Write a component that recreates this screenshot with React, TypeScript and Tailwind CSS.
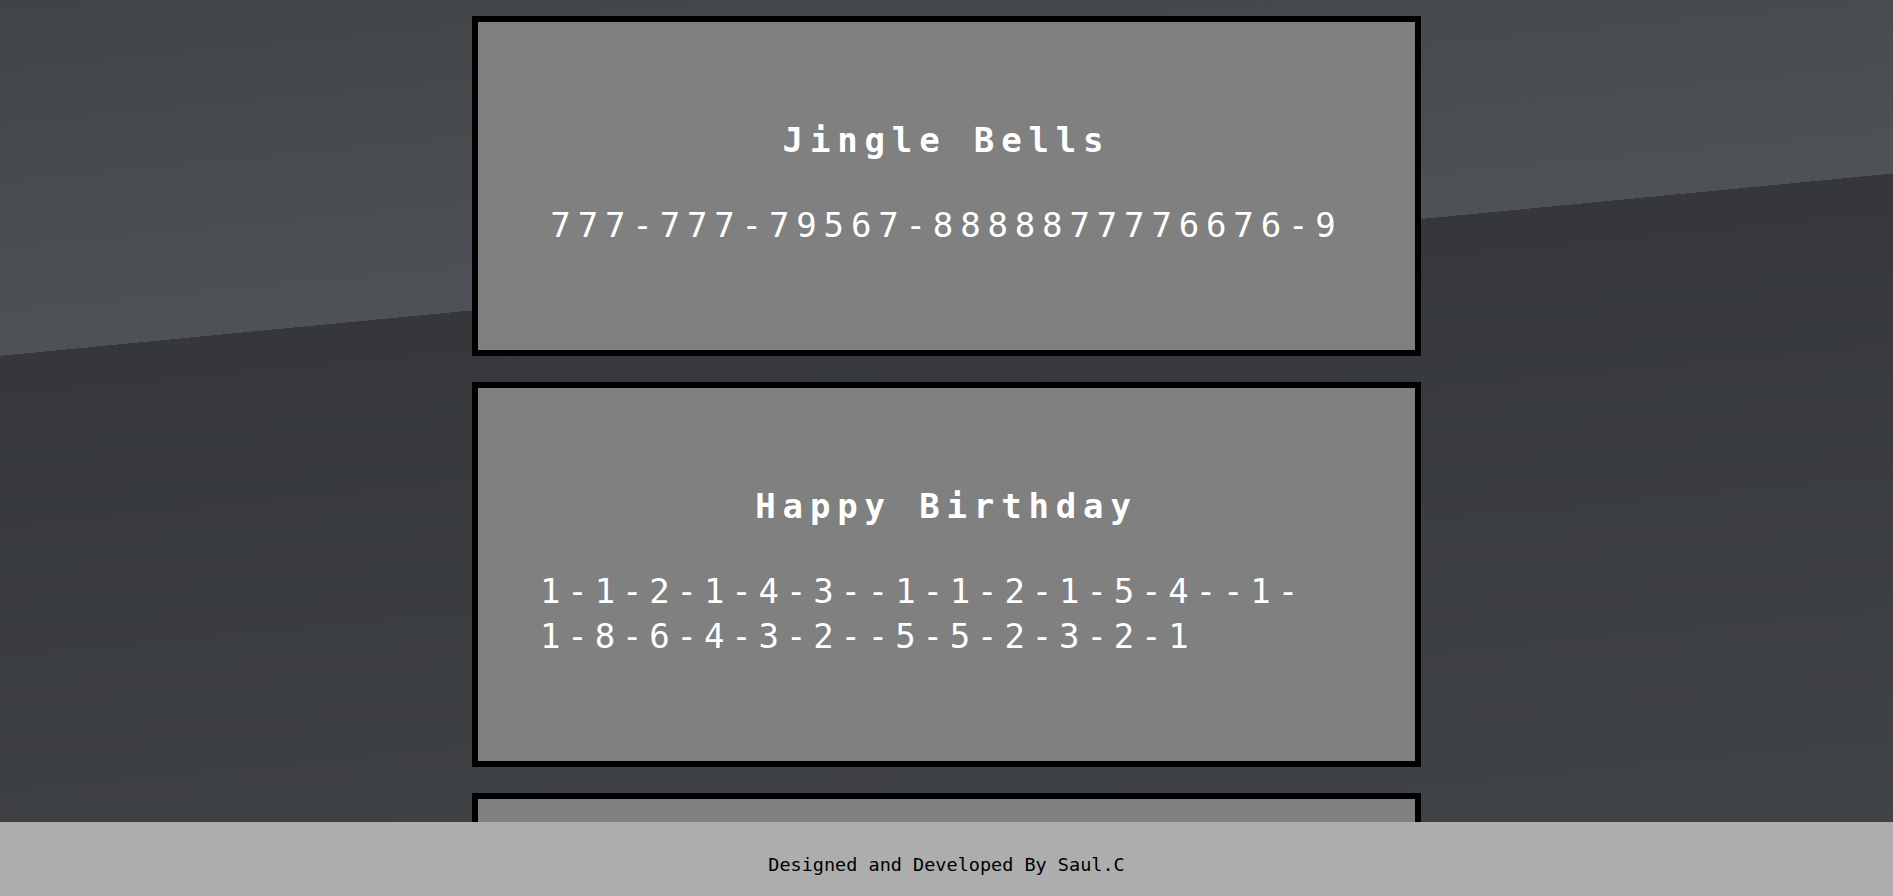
import React from 'react';

type Song = { title: string; notes: string };

const songs: Song[] = [
  { title: 'Jingle Bells', notes: '777-777-79567-8888877776676-9' },
  { title: 'Happy Birthday', notes: '1-1-2-1-4-3--1-1-2-1-5-4--1-1-8-6-4-3-2--5-5-2-3-2-1' },
  { title: 'Twinkle Twinkle', notes: '1-1-5-5-6-6-5--4-4-3-3-2-2-1' },
  { title: 'Ode To Joy', notes: '3-3-4-5-5-4-3-2-1-1-2-3-3-2-2' },
];

const SongCard: React.FC<{ song: Song }> = ({ song }) => (
  <div className="w-[949px] mx-auto border-[6px] border-black bg-[#808080] px-[62px] pt-[96px] pb-[102px] text-center text-white">
    <h2 className="text-[34px] leading-[45px] font-bold tracking-[6.85px]">{song.title}</h2>
    <div className="flex justify-center mt-[40px]">
      <p className="text-left text-[34px] leading-[45px] tracking-[6.85px] break-words">{song.notes}</p>
    </div>
  </div>
);

export default function App() {
  return (
    <div
      className="min-h-screen bg-fixed bg-[linear-gradient(174.5deg,#414447_0%,#4e5256_33%,#35373a_33%,#424548_100%)] pt-[16px] pb-[120px]"
      style={{ fontFamily: '"DejaVu Sans Mono", "Liberation Mono", monospace' }}
    >
      <div className="flex flex-col gap-[26px]">
        {songs.map((song) => (
          <SongCard key={song.title} song={song} />
        ))}
      </div>

      {/* Footer */}
      <footer className="fixed bottom-0 left-0 w-full h-[74px] bg-[#adadad] flex items-center justify-center pt-[12px]">
        <p className="text-[18.5px] text-black">Designed and Developed By Saul.C</p>
      </footer>
    </div>
  );
}
